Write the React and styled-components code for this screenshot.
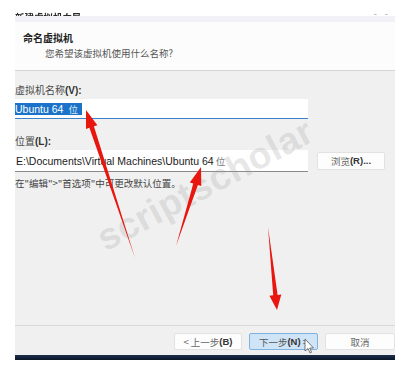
import React from "react";
import styled, { createGlobalStyle } from "styled-components";

const Global = createGlobalStyle`
  html, body { margin: 0; padding: 0; background: #ffffff; }
  body { font-family: "Noto Sans CJK SC", "Liberation Sans", sans-serif; }
`;

const Page = styled.div`
  position: relative;
  width: 411px;
  height: 375px;
  overflow: hidden;
  background: #ffffff;
`;

const Window = styled.div`
  margin-left: 15px;
  width: 380px;
  display: flex;
  flex-direction: column;
`;

const TitleBar = styled.div`
  height: 16px;
  box-sizing: border-box;
  padding-top: 12px;
  display: flex;
  align-items: flex-start;
  justify-content: space-between;
  overflow: hidden;
  background: #ffffff;
`;

const TitleText = styled.span`
  font-size: 9.5px;
  line-height: 10px;
  font-weight: 700;
  color: #2a2a2a;
  filter: blur(0.5px);
`;

const TitleCtl = styled.span`
  font-size: 9px;
  line-height: 4px;
  color: #999;
  margin-right: 4px;
  letter-spacing: 3px;
`;

const Band = styled.div`
  height: 6px;
  background: #f1f1f7;
`;

const Header = styled.div`
  background: #fcfcfc;
  border-bottom: 1px solid #d4d4d4;
  padding: 9px 0 0 8px;
  height: 39px;
`;

const HeadTitle = styled.div`
  font-size: 10px;
  line-height: 14px;
  font-weight: 700;
  color: #222;
`;

const HeadSub = styled.div`
  font-size: 9.5px;
  line-height: 14px;
  color: #555;
  padding-left: 22px;
  margin-top: 1px;
`;

const Body = styled.div`
  height: 284px;
  background: #f0f0f0;
  display: flex;
  flex-direction: column;
  overflow: hidden;
`;

const Form = styled.div`
  padding-top: 12px;
  display: flex;
  flex-direction: column;
`;

const Label = styled.div`
  font-size: 10px;
  line-height: 14px;
  color: #4a4a4a;
  margin-top: ${(p) => p.$top || 0}px;
  white-space: nowrap;
`;

const Key = styled.span`
  font-family: "Liberation Sans", sans-serif;
  font-weight: 700;
  color: #333;
`;

const Field = styled.div`
  width: 293px;
  height: ${(p) => p.$h}px;
  box-sizing: border-box;
  background: #ffffff;
  border-bottom: 1px solid ${(p) => (p.$focus ? "#3b82c9" : "#8a8a8a")};
  display: flex;
  align-items: center;
  padding-left: 1px;
  margin-top: 1px;
  font-family: "Liberation Sans", "Noto Sans CJK SC", sans-serif;
  font-size: 10.5px;
  color: #1a1a1a;
  white-space: nowrap;
`;

const Selected = styled.span`
  background: #1a73c8;
  color: #ffffff;
  line-height: 12px;
  padding: 0 4px 0 0;
  margin-left: -1px;
`;

const Dim = styled.span`
  font-family: "Noto Sans CJK SC", sans-serif;
  font-size: 9.5px;
  color: ${(p) => p.$c || "#777"};
  margin-left: 2px;
`;

const Row = styled.div`
  display: flex;
  align-items: center;
  gap: 9px;
`;

const Button = styled.div`
  width: ${(p) => p.$w}px;
  height: ${(p) => p.$h || 17}px;
  box-sizing: border-box;
  display: flex;
  align-items: center;
  justify-content: center;
  background: ${(p) => (p.$primary ? "#cfe4f6" : "#fdfdfd")};
  border: 1px solid ${(p) => (p.$primary ? "#7fb2e0" : "#e2e2e2")};
  border-radius: 2px;
  font-size: 9.5px;
  color: ${(p) => (p.$primary ? "#555" : "#666")};
  white-space: nowrap;
  flex-shrink: 0;
`;

const Hint = styled.div`
  font-size: 9.5px;
  line-height: 14px;
  color: #444;
  margin-top: 4px;
  white-space: nowrap;
`;

const Spacer = styled.div`
  flex: 1;
`;

const Footer = styled.div`
  border-top: 1px solid #d9d9d9;
  padding: 7px 0 5px;
  display: flex;
  justify-content: flex-end;
  gap: 7px;
`;

const DarkBar = styled.div`
  height: 5px;
  background: linear-gradient(#1d2f4d, #0a1628);
`;

const Watermark = styled.div`
  position: absolute;
  left: 86px;
  top: 164px;
  font-family: "Liberation Sans", sans-serif;
  font-weight: 700;
  font-size: 37px;
  letter-spacing: 0.5px;
  color: rgba(160, 160, 160, 0.26);
  transform: rotate(-28deg);
  transform-origin: center;
  white-space: nowrap;
  pointer-events: none;
`;

const Overlay = styled.svg`
  position: absolute;
  left: 0;
  top: 0;
  pointer-events: none;
`;

function arrow(x1, y1, x2, y2, head = 15, hw = 6, shaft = 2.2) {
  const dx = x2 - x1;
  const dy = y2 - y1;
  const len = Math.hypot(dx, dy);
  const ux = dx / len;
  const uy = dy / len;
  const px = -uy;
  const py = ux;
  const bx = x2 - ux * head;
  const by = y2 - uy * head;
  const pts = [
    [x1, y1],
    [bx + px * shaft, by + py * shaft],
    [bx + px * hw, by + py * hw],
    [x2, y2],
    [bx - px * hw, by - py * hw],
    [bx - px * shaft, by - py * shaft],
  ];
  return pts.map((p) => p.map((v) => v.toFixed(1)).join(",")).join(" ");
}

export default function App() {
  return (
    <Page>
      <Global />
      <Window>
        <TitleBar>
          <TitleText>新建虚拟机向导</TitleText>
          <TitleCtl>- -</TitleCtl>
        </TitleBar>
        <Band />
        <Header>
          <HeadTitle>命名虚拟机</HeadTitle>
          <HeadSub>您希望该虚拟机使用什么名称?</HeadSub>
        </Header>
        <Body>
          <Form>
            <Label>
              虚拟机名称<Key>(V):</Key>
            </Label>
            <Field $h={20} $focus>
              <Selected>
                Ubuntu 64 <Dim $c="#dbe9f7">位</Dim>
              </Selected>
            </Field>
            <Label $top={15}>
              位置<Key>(L):</Key>
            </Label>
            <Row>
              <Field $h={22}>
                E:\Documents\Virtual Machines\Ubuntu 64 <Dim>位</Dim>
              </Field>
              <Button $w={68} $h={18}>
                浏览<Key>(R)...</Key>
              </Button>
            </Row>
            <Hint>在"编辑"&gt;"首选项"中可更改默认位置。</Hint>
          </Form>
          <Spacer />
          <Footer>
            <Button $w={68}>
              &lt; 上一步<Key>(B)</Key>
            </Button>
            <Button $w={69} $primary>
              下一步<Key>(N)</Key>&nbsp;&gt;
            </Button>
            <Button $w={70}>取消</Button>
          </Footer>
        </Body>
        <DarkBar />
      </Window>
      <Watermark>scriptscholar</Watermark>
      <Overlay width="411" height="375" viewBox="0 0 411 375">
        <polygon points={arrow(135, 258, 86, 110, 18, 6, 2.4)} fill="#e8160f" />
        <polygon points={arrow(176, 246, 201, 167, 18, 6, 2.4)} fill="#e8160f" />
        <polygon points={arrow(268, 227, 277, 310, 15, 6, 2.2)} fill="#e8160f" />
        <path
          d="M305 339 L305 351 L308 348.5 L310 353 L311.6 352.3 L309.7 348 L313.5 348 Z"
          fill="#ffffff"
          stroke="#555"
          strokeWidth="0.8"
        />
      </Overlay>
    </Page>
  );
}
